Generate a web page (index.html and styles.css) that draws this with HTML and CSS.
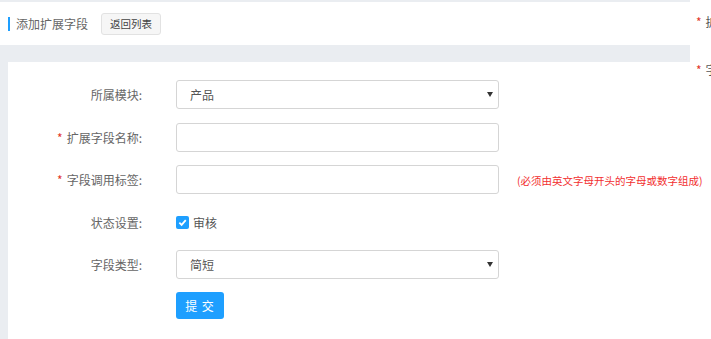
FILE: index.html
```html
<!DOCTYPE html>
<html lang="zh-CN">
<head>
    <meta charset="UTF-8">
    <meta name="viewport" content="width=device-width, initial-scale=1.0">
    <title>添加扩展字段</title>
    <link rel="stylesheet" href="styles.css">
</head>
<body>
    <div class="page">
        <div class="main">
            <div class="header">
                <span class="title">添加扩展字段</span>
                <button class="btn-back">返回列表</button>
            </div>
            <div class="card">
                <form class="form">
                    <div class="row">
                        <label class="label">所属模块:</label>
                        <div class="select-wrap">
                            <select class="field">
                                <option>产品</option>
                            </select>
                        </div>
                    </div>
                    <div class="row">
                        <label class="label"><i class="req">*</i>扩展字段名称:</label>
                        <input class="field" type="text">
                    </div>
                    <div class="row">
                        <label class="label"><i class="req">*</i>字段调用标签:</label>
                        <input class="field" type="text">
                        <span class="hint">(必须由英文字母开头的字母或数字组成)</span>
                    </div>
                    <div class="row">
                        <label class="label">状态设置:</label>
                        <span class="check">
                            <span class="box">
                                <svg width="9" height="9" viewBox="0 0 10 10"><path d="M1.5 5.2 L4 7.6 L8.6 2.4" fill="none" stroke="#fff" stroke-width="2"/></svg>
                            </span>
                            审核
                        </span>
                    </div>
                    <div class="row">
                        <label class="label">字段类型:</label>
                        <div class="select-wrap">
                            <select class="field">
                                <option>简短</option>
                            </select>
                        </div>
                    </div>
                    <div class="row row-submit">
                        <button type="button" class="btn-submit">提 交</button>
                    </div>
                </form>
            </div>
        </div>
        <div class="side">
            <div class="side-row"><i class="req">*</i>扩展字段名称</div>
            <div class="side-row"><i class="req">*</i>字段调用标签</div>
        </div>
    </div>
</body>
</html>
```

FILE: styles.css
```css
body {
    margin: 0;
    background: #eaedf1;
    font-family: "Noto Sans CJK SC", "Noto Sans", sans-serif;
    color: #666;
    height: 339px;
    overflow: hidden;
}
.page {
    display: flex;
    height: 339px;
}
.main {
    position: relative;
    z-index: 1;
    width: 690px;
    flex: none;
    display: flex;
    flex-direction: column;
    padding-top: 2px;
}
.header {
    height: 43px;
    background: #fff;
    display: flex;
    align-items: center;
    padding-left: 8px;
}
.title {
    border-left: 2px solid #1e9fff;
    padding-left: 6px;
    font-size: 12px;
    line-height: 14px;
    color: #666;
}
.btn-back {
    margin-left: 13px;
    width: 60px;
    height: 22px;
    padding: 0;
    background: #f6f6f6;
    border: 1px solid #e2e2e2;
    border-radius: 3px;
    font-family: inherit;
    font-size: 10.5px;
    color: #444;
}
.card {
    flex: 1;
    margin-top: 17px;
    margin-left: 8px;
    background: #fff;
    padding-top: 18px;
}
.form {
    display: flex;
    flex-direction: column;
    gap: 13.5px;
}
.row {
    display: flex;
    align-items: center;
    height: 29px;
}
.label {
    width: 134px;
    flex: none;
    text-align: right;
    font-size: 12px;
    margin-right: 34px;
    color: #666;
}
.req {
    font-style: normal;
    color: #e2372a;
    font-size: 12px;
    margin-right: 4px;
}
.field {
    box-sizing: border-box;
    flex: none;
    width: 323px;
    height: 29px;
    border: 1px solid #d5d5d5;
    border-radius: 3px;
    background: #fff;
    font-family: inherit;
    font-size: 12px;
    color: #555;
    padding: 0 13px;
    outline: none;
}
select.field {
    appearance: none;
    -webkit-appearance: none;
}
.select-wrap {
    position: relative;
}
.select-wrap::after {
    content: "";
    position: absolute;
    right: 6px;
    top: 12px;
    border-left: 3px solid transparent;
    border-right: 3px solid transparent;
    border-top: 5px solid #333;
}
.hint {
    margin-left: 18px;
    margin-top: 2px;
    white-space: nowrap;
    font-size: 10.5px;
    color: #f23030;
}
.check {
    display: flex;
    align-items: center;
    gap: 4px;
    font-size: 12px;
    color: #555;
}
.box {
    width: 13px;
    height: 13px;
    border-radius: 2px;
    background: #1e9fff;
    display: flex;
    align-items: center;
    justify-content: center;
}
.row-submit {
    padding-left: 168px;
    height: 27px;
    margin-top: -1px;
}
.btn-submit {
    width: 48px;
    height: 27px;
    padding: 0;
    border: none;
    border-radius: 3px;
    background: #1e9fff;
    color: #fff;
    font-family: inherit;
    font-size: 12px;
    letter-spacing: 1px;
}
.side {
    flex: 1;
    background: #fff;
    overflow: hidden;
    padding-top: 13px;
    padding-left: 6px;
}
.side-row {
    white-space: nowrap;
    font-size: 12px;
    color: #555;
    height: 18px;
    margin-bottom: 30px;
}
```
